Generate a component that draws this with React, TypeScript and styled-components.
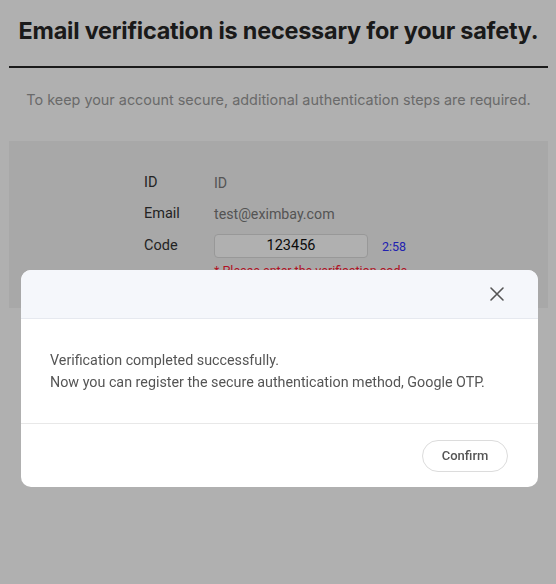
import React from "react";
import styled, { createGlobalStyle } from "styled-components";

const Global = createGlobalStyle`
  html, body { margin: 0; padding: 0; background: #fff; }
  body { font-family: Inter, "Noto Sans", sans-serif; }
`;

const Page = styled.div`
  padding: 0 8px 0 9px;
  display: flex;
  flex-direction: column;
`;

const Title = styled.h1`
  margin: 0;
  padding: 15px 0 19px;
  text-align: center;
  font-size: 23.4px;
  font-weight: 700;
  color: #262626;
  letter-spacing: -0.2px;
  border-bottom: 2px solid #262626;
  line-height: 32px;
`;

const Subtitle = styled.p`
  margin: 0;
  padding: 21px 0 30px;
  text-align: center;
  font-size: 14.4px;
  color: #9a9a9a;
  line-height: 22px;
`;

const Box = styled.section`
  background: #f4f4f4;
  padding: 31px 0 30px 135px;
  display: grid;
  grid-template-columns: 70px auto;
  row-gap: 9px;
  align-items: center;
  font-family: Roboto, sans-serif;
`;

const Label = styled.span`
  font-size: 14.5px;
  color: #333;
  line-height: 22px;
`;

const Value = styled.span`
  font-size: 14.2px;
  color: #7a7a7a;
  line-height: 22px;
`;

const CodeCell = styled.div`
  display: flex;
  align-items: center;
  gap: 14px;
`;

const CodeInput = styled.div`
  width: 152px;
  height: 22px;
  border: 1px solid #dcdcdc;
  border-radius: 4px;
  background: #fff;
  text-align: center;
  font-size: 14.5px;
  line-height: 22px;
  color: #111;
`;

const Timer = styled.span`
  font-size: 12.5px;
  color: #3030ff;
`;

const ErrorText = styled.span`
  grid-column: 2;
  font-size: 12.5px;
  color: #ff1a35;
  margin-top: -3px;
  line-height: 14px;
`;

const Overlay = styled.div`
  position: fixed;
  inset: 0;
  background: rgba(0, 0, 0, 0.31);
  display: flex;
  justify-content: center;
  padding-top: 270px;
`;

const Modal = styled.div`
  width: 517px;
  height: 217px;
  background: #fff;
  border-radius: 10px;
  overflow: hidden;
  display: flex;
  flex-direction: column;
  align-self: flex-start;
  margin-left: 3px;
`;

const ModalHeader = styled.div`
  height: 48px;
  background: #f5f7fb;
  border-bottom: 1px solid #e6e9ef;
  display: flex;
  justify-content: flex-end;
  align-items: center;
  padding-right: 32px;
`;

const CloseButton = styled.button`
  border: 0;
  background: transparent;
  padding: 0;
  width: 18px;
  height: 18px;
  display: flex;
  align-items: center;
  justify-content: center;
  cursor: pointer;
`;

const ModalBody = styled.div`
  flex: 1;
  padding: 30px 29px;
  font-family: Roboto, sans-serif;
  font-size: 14.3px;
  line-height: 22px;
  color: #555;
  border-bottom: 1px solid #e8e8e8;
  display: flex;
  flex-direction: column;
  justify-content: center;
`;

const ModalFooter = styled.div`
  height: 63px;
  display: flex;
  justify-content: flex-end;
  align-items: center;
  padding-right: 30px;
`;

const ConfirmButton = styled.button`
  width: 86px;
  height: 32px;
  border: 1px solid #dcdcdc;
  border-radius: 16px;
  background: #fff;
  font-family: Roboto, sans-serif;
  font-size: 13px;
  font-weight: 500;
  color: #555;
  cursor: pointer;
`;

export default function App() {
  return (
    <>
      <Global />
      <Page>
        <Title>Email verification is necessary for your safety.</Title>
        <Subtitle>
          To keep your account secure, additional authentication steps are required.
        </Subtitle>
        <Box>
          <Label>ID</Label>
          <Value>ID</Value>
          <Label>Email</Label>
          <Value>test@eximbay.com</Value>
          <Label>Code</Label>
          <CodeCell>
            <CodeInput>123456</CodeInput>
            <Timer>2:58</Timer>
          </CodeCell>
          <ErrorText>* Please enter the verification code</ErrorText>
        </Box>
      </Page>
      <Overlay>
        <Modal>
          <ModalHeader>
            <CloseButton aria-label="close">
              <svg width="16" height="16" viewBox="0 0 16 16">
                <path d="M2 2 L14 14 M14 2 L2 14" stroke="#555" strokeWidth="1.6" strokeLinecap="round" />
              </svg>
            </CloseButton>
          </ModalHeader>
          <ModalBody>
            <div>Verification completed successfully.</div>
            <div>Now you can register the secure authentication method, Google OTP.</div>
          </ModalBody>
          <ModalFooter>
            <ConfirmButton>Confirm</ConfirmButton>
          </ModalFooter>
        </Modal>
      </Overlay>
    </>
  );
}
